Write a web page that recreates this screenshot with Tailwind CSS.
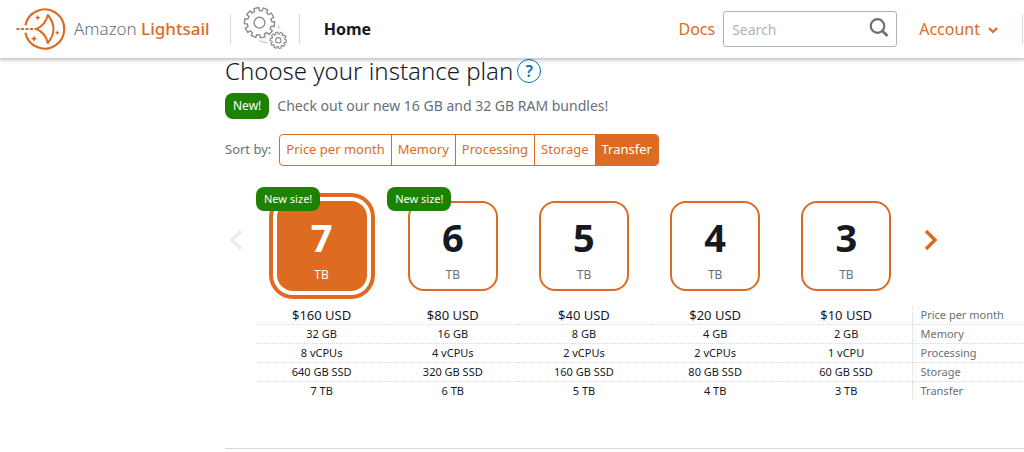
<!DOCTYPE html>
<html lang="en">

<head>
    <meta charset="UTF-8">
    <meta name="viewport" content="width=device-width, initial-scale=1.0">
    <title>Amazon Lightsail</title>
    <script src="https://cdn.jsdelivr.net/npm/@tailwindcss/browser@4"></script>
</head>

<body class="bg-white font-['Noto_Sans','Open_Sans',sans-serif] text-[#16191f]">
    <!-- Top navigation -->
    <header class="relative z-10 flex h-[58px] items-center bg-white pl-4 shadow-[0_1px_4px_1px_rgba(0,0,0,0.25)]">
        <a href="#" class="flex items-center gap-2 text-[17px] text-[#687078]">
            <svg class="h-[50px] w-[50px]" viewBox="0 0 50 50" fill="none" stroke="#dd6b22">
                <path stroke-width="2.2" d="M9.4 21.2A19.6 19.6 0 1 1 9.4 28.8" />
                <path stroke-width="1.8" stroke-dasharray="3 1.5" d="M0.5 25H20" />
                <path stroke-width="2" stroke-linejoin="round" d="M31.8 11C35.5 15.500 37.500 20 37.500 25C37.500 30 35.500 34.500 31.800 39C30.500 33 27 28 20.500 25C27 22 30.500 17 31.800 11Z" />
                <path stroke="none" fill="#dd6b22" d="M21.7 10.900l.9 1.900 1.900.9-1.900.9-.9 1.900-.9-1.900-1.900-.9 1.900-.9zM18 31.400l1 2.300 2.300 1-2.300 1-1 2.300-1-2.300-2.300-1 2.300-1zM41.300 26.200l.8 1.700 1.700.8-1.700.8-.8 1.700-.8-1.700-1.700-.8 1.700-.8z" />
            </svg>
            <span class="font-light">Amazon <span class="font-medium text-[#dd6b22]">Lightsail</span></span>
        </a>
        <div class="ml-5 flex h-[30px] items-center border-x border-[#d5dbdb] pr-2.5 pl-3">
            <svg class="h-[46px] w-[46px]" viewBox="0 0 46 46" fill="none" stroke="#8c8c8c" stroke-linejoin="round">
                <g id="gears"></g>
                <path stroke="#c8c8c8" stroke-width="1.3" d="M16.500 34.500c2.500 1.600 5 2.200 8 2.200M35 19.500l1.500 3" />
            </svg>
        </div>
        <a href="#" class="ml-6 text-base font-bold">Home</a>
        <div class="ml-auto flex items-center">
            <a href="#" class="text-base text-[#dd6b22]">Docs</a>
            <div class="relative ml-2">
                <input type="search" aria-label="Search" placeholder="Search" class="h-9 w-[174px] rounded-[3px] border border-[#aab7b8] px-2 text-sm placeholder:text-[#aab7b8]">
                <svg class="absolute top-[7px] right-2 h-5 w-5" viewBox="0 0 20 20" fill="none" stroke="#687078" stroke-width="2.2">
                    <circle cx="8.500" cy="8" r="6.800" />
                    <path stroke-width="2.800" d="M13.300 12.800L18.500 18" />
                </svg>
            </div>
            <button class="ml-[22px] flex items-center gap-2 text-base text-[#dd6b22]">
                Account
                <svg class="h-2.5 w-2.5" viewBox="0 0 10 10" fill="none" stroke="currentColor" stroke-width="2.2">
                    <path d="M1 4l4 4 4-4" />
                </svg>
            </button>
            <div class="ml-6 h-[30px] border-l border-[#d5dbdb] pr-px"></div>
        </div>
    </header>

    <main class="pl-[225px]">
        <div class="flex h-[25px] items-center gap-1">
            <h1 class="text-2xl font-light">Choose your instance plan</h1>
            <button aria-label="Help" class="h-6 w-6 rounded-full border border-[#0073bb] text-base leading-none font-semibold text-[#0073bb]">?</button>
        </div>

        <div class="mt-2.5 flex items-center gap-2 text-sm text-[#687078]">
            <span class="rounded-lg bg-[#1d8102] px-2 py-1 text-xs leading-[18px] text-white">New!</span>
            Check out our new 16 GB and 32 GB RAM bundles!
        </div>

        <!-- Sort options -->
        <div class="mt-[15px] flex items-center gap-2 text-[13px] text-[#687078]">
            Sort by:
            <div class="flex h-8 divide-x divide-[#dd6b22] overflow-hidden rounded border border-[#dd6b22] text-[#dd6b22]">
                <button class="px-1.5">Price per month</button>
                <button class="px-1.5">Memory</button>
                <button class="px-1.5">Processing</button>
                <button class="px-1.5">Storage</button>
                <button class="bg-[#dd6b22] px-1.5 text-white">Transfer</button>
            </div>
        </div>

        <!-- Plan cards -->
        <div class="mt-5 flex">
            <button aria-label="Previous plans" class="w-[31px] pb-3 pl-1 text-[#eaeded]">
                <svg class="h-5 w-3.5" viewBox="0 0 14 20" fill="none" stroke="currentColor" stroke-width="3.5">
                    <path d="M12 1L3 10l9 9" />
                </svg>
            </button>
            <div class="grid flex-1 grid-cols-5">
                <div class="relative flex justify-center py-[15px]">
                    <button class="flex h-[90px] w-[90px] flex-col items-center justify-end gap-2.5 rounded-2xl bg-[#dd6b22] pb-2 text-white shadow-[0_0_0_4px_#fff,0_0_0_8px_#dd6b22]">
                        <span class="text-[38px] leading-10 font-bold">7</span>
                        <span class="text-xs">TB</span>
                    </button>
                    <span class="absolute top-px left-0 rounded-lg bg-[#1d8102] px-2 py-1 text-[11px] leading-4 text-white">New size!</span>
                </div>
                <div class="relative flex justify-center py-[15px]">
                    <button class="flex h-[90px] w-[90px] flex-col items-center justify-end gap-2.5 rounded-2xl border-2 border-[#dd6b22] pb-1.5">
                        <span class="text-[38px] leading-10 font-bold">6</span>
                        <span class="text-xs text-[#687078]">TB</span>
                    </button>
                    <span class="absolute top-px left-0 rounded-lg bg-[#1d8102] px-2 py-1 text-[11px] leading-4 text-white">New size!</span>
                </div>
                <div class="flex justify-center py-[15px]">
                    <button class="flex h-[90px] w-[90px] flex-col items-center justify-end gap-2.5 rounded-2xl border-2 border-[#dd6b22] pb-1.5">
                        <span class="text-[38px] leading-10 font-bold">5</span>
                        <span class="text-xs text-[#687078]">TB</span>
                    </button>
                </div>
                <div class="flex justify-center py-[15px]">
                    <button class="flex h-[90px] w-[90px] flex-col items-center justify-end gap-2.5 rounded-2xl border-2 border-[#dd6b22] pb-1.5">
                        <span class="text-[38px] leading-10 font-bold">4</span>
                        <span class="text-xs text-[#687078]">TB</span>
                    </button>
                </div>
                <div class="flex justify-center py-[15px]">
                    <button class="flex h-[90px] w-[90px] flex-col items-center justify-end gap-2.5 rounded-2xl border-2 border-[#dd6b22] pb-1.5">
                        <span class="text-[38px] leading-10 font-bold">3</span>
                        <span class="text-xs text-[#687078]">TB</span>
                    </button>
                </div>
            </div>
            <div class="flex w-28 items-center pb-3 pl-3">
                <button aria-label="Next plans" class="text-[#dd6b22]">
                    <svg class="h-5 w-3.5" viewBox="0 0 14 20" fill="none" stroke="currentColor" stroke-width="3.5">
                        <path d="M2 1l9 9-9 9" />
                    </svg>
                </button>
            </div>
        </div>

        <!-- Plan details -->
        <div class="pl-[31px]">
            <table class="w-full table-fixed text-center text-[11px] leading-[18px]">
                <tbody class="divide-y divide-dotted divide-[#d5dbdb]">
                    <tr class="text-[13px]">
                        <td>$160 USD</td>
                        <td>$80 USD</td>
                        <td>$40 USD</td>
                        <td>$20 USD</td>
                        <td>$10 USD</td>
                        <th class="w-28 border-l border-dotted border-[#d5dbdb] pl-2 text-left text-[11px] font-normal text-[#687078]">Price per month</th>
                    </tr>
                    <tr>
                        <td>32 GB</td>
                        <td>16 GB</td>
                        <td>8 GB</td>
                        <td>4 GB</td>
                        <td>2 GB</td>
                        <th class="border-l border-dotted border-[#d5dbdb] pl-2 text-left font-normal text-[#687078]">Memory</th>
                    </tr>
                    <tr>
                        <td>8 vCPUs</td>
                        <td>4 vCPUs</td>
                        <td>2 vCPUs</td>
                        <td>2 vCPUs</td>
                        <td>1 vCPU</td>
                        <th class="border-l border-dotted border-[#d5dbdb] pl-2 text-left font-normal text-[#687078]">Processing</th>
                    </tr>
                    <tr>
                        <td>640 GB SSD</td>
                        <td>320 GB SSD</td>
                        <td>160 GB SSD</td>
                        <td>80 GB SSD</td>
                        <td>60 GB SSD</td>
                        <th class="border-l border-dotted border-[#d5dbdb] pl-2 text-left font-normal text-[#687078]">Storage</th>
                    </tr>
                    <tr>
                        <td>7 TB</td>
                        <td>6 TB</td>
                        <td>5 TB</td>
                        <td>4 TB</td>
                        <td>3 TB</td>
                        <th class="border-l border-dotted border-[#d5dbdb] pl-2 text-left font-normal text-[#687078]">Transfer</th>
                    </tr>
                </tbody>
            </table>
        </div>

        <hr class="mt-12 border-[#d5dbdb]">
    </main>

    <script>
        // Toothed outline plus hub for each gear
        function gear(cx, cy, outer, inner, hub, teeth, width) {
            const step = Math.PI * 2 / teeth;
            const points = [];
            for (let i = 0; i < teeth; i++) {
                [[-0.32, inner], [-0.26, outer], [0.26, outer], [0.32, inner]].forEach(([offset, r]) => {
                    const a = (i + offset) * step + 0.1;
                    points.push((cx + r * Math.cos(a)).toFixed(2) + ' ' + (cy + r * Math.sin(a)).toFixed(2));
                });
            }
            return `<path stroke-width="${width}" d="M${points.join('L')}Z"/><circle stroke-width="${width}" cx="${cx}" cy="${cy}" r="${hub}"/>`;
        }
        document.getElementById('gears').innerHTML =
            gear(16.5, 16.7, 15.2, 12.2, 5.4, 10, 1.4) + gear(35.3, 34.3, 8.2, 6.4, 2.7, 10, 1.1);
    </script>
</body>

</html>
